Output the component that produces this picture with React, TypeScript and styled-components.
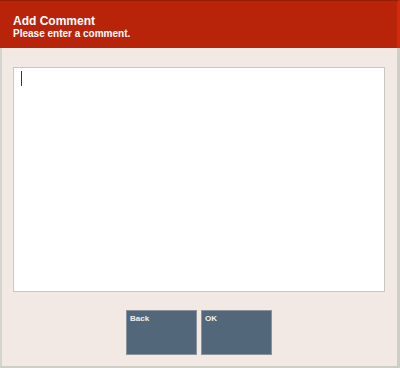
import React from 'react';
import styled, { createGlobalStyle } from 'styled-components';

const GlobalStyle = createGlobalStyle`
  html, body {
    margin: 0;
    padding: 0;
    background: #f2e9e4;
  }
  * {
    box-sizing: border-box;
  }
`;

export default function App() {
  return (
    <>
      <GlobalStyle />
      <Window>
        <Header>
          <Title>Add Comment</Title>
          <Subtitle>Please enter a comment.</Subtitle>
        </Header>
        <Body>
          <CommentBox>
            <Caret />
          </CommentBox>
          <ButtonRow>
            <ActionButton>Back</ActionButton>
            <ActionButton>OK</ActionButton>
          </ButtonRow>
        </Body>
      </Window>
    </>
  );
}

const Window = styled.div`
  display: flex;
  flex-direction: column;
  width: 400px;
  height: 368px;
  background-color: #f2e9e4;
  border-left: 2px solid #d6d4cf;
  border-right: 3px solid #cfcdc8;
  border-bottom: 2px solid #cfcdc8;
  font-family: 'Liberation Sans', Arial, sans-serif;
`;

const Header = styled.header`
  display: flex;
  flex-direction: column;
  height: 48px;
  margin: 0 -3px 0 -2px;
  padding: 14px 0 0 13px;
  background-color: #b8240a;
  border-top: 1px solid #961c06;
  border-right: 3px solid #d42a0c;
  color: #fff;
`;

const Title = styled.div`
  font-size: 12px;
  font-weight: 700;
  line-height: 13px;
`;

const Subtitle = styled.div`
  font-size: 10px;
  font-weight: 700;
  line-height: 11px;
`;

const Body = styled.main`
  display: flex;
  flex-direction: column;
  align-items: center;
  flex: 1;
  padding: 19px 12px 0 11px;
`;

const CommentBox = styled.div`
  width: 100%;
  height: 225px;
  padding: 3px 0 0 7px;
  background-color: #fff;
  border: 1px solid #c9c7c4;
`;

const Caret = styled.div`
  width: 1px;
  height: 15px;
  background-color: #3a3a3a;
`;

const ButtonRow = styled.div`
  display: flex;
  gap: 4px;
  margin-top: 18px;
`;

const ActionButton = styled.button`
  display: flex;
  align-items: flex-start;
  width: 71px;
  height: 45px;
  padding: 3px 3px;
  background-color: #53677a;
  border: 1px solid #8a939c;
  color: #f2f2f2;
  font-family: 'Liberation Sans', Arial, sans-serif;
  font-size: 8px;
  font-weight: 700;
  text-align: left;
`;
